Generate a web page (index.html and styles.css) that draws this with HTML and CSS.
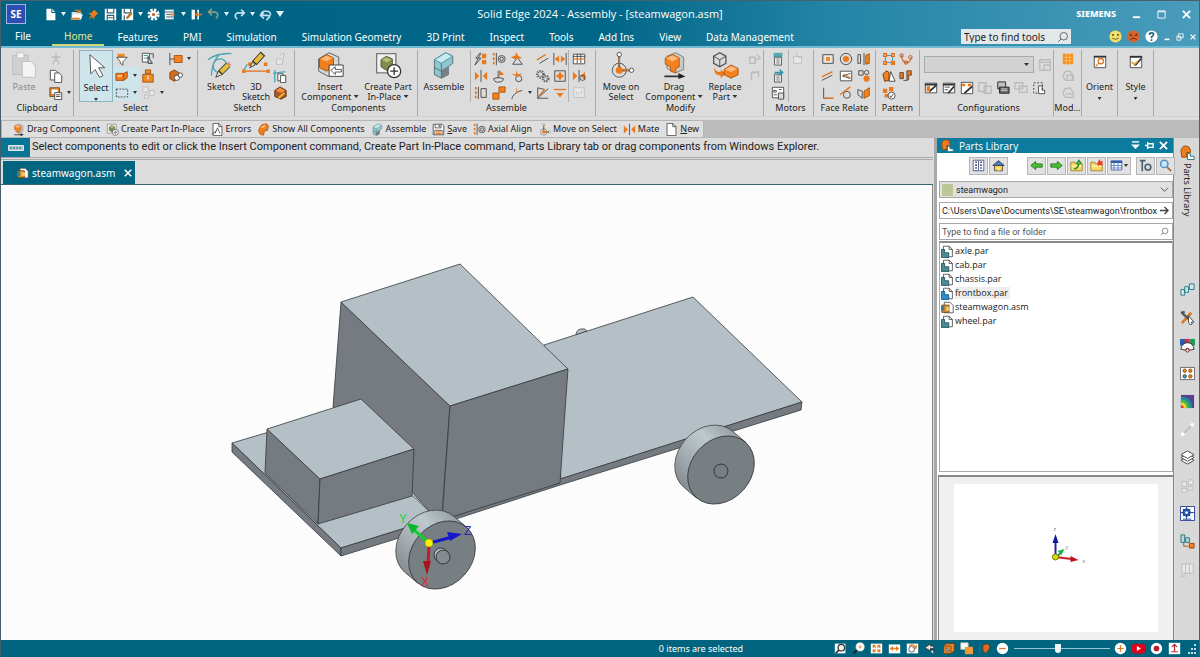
FILE: index.html
```html
<!DOCTYPE html>
<html lang="en">
<head>
<meta charset="utf-8">
<title>Solid Edge 2024 - Assembly - [steamwagon.asm]</title>
<link rel="stylesheet" href="styles.css">
</head>
<body>
<svg class="sprite" aria-hidden="true">
  <symbol id="part" viewBox="0 0 16 16"><path class="w" d="M3 1.500h7l4 4v9H3z"/><path class="k" d="M10 1.500v4h4"/><path fill="#4b8b95" stroke="#174c58" d="M.5 5.500h4v4h5v6h-9z"/></symbol>
  <symbol id="asm" viewBox="0 0 16 16"><path class="w" d="M4 1.500h7l4 4v9H4z"/><path fill="#d98a2b" stroke="#6b4a1c" d="M1 5h9v9H1z"/><path fill="#f3c26b" d="M6 7h5v5H6z"/><path fill="#3b8090" d="M0 6h4v6H0z"/></symbol>
  <symbol id="blob" viewBox="0 0 16 16"><path fill="#ef7d21" stroke="#b8570d" d="M3 6 6 2l6-1 2 3-1 5-4 1-1 5-4-1-2-4z"/><path fill="#ffb06a" d="m4 6 3-3 4-1-2 4z"/></symbol>
  <symbol id="move" viewBox="0 0 32 32"><circle class="k" cx="14" cy="22" r="8"/><path class="k2" d="M14 4v18h14"/><circle class="w" cx="14" cy="4" r="2.500"/><circle class="w" cx="28" cy="22" r="2.500"/><circle class="o" cx="14" cy="22" r="4"/><path class="os" d="M14 7v10M19 22h6"/></symbol>
  <symbol id="elbow" viewBox="0 0 32 32"><path fill="#8dc6cf" stroke="#4c6a72" d="m5 10 13-8 8 4v8l-5 4v9l-8 4-8-4z"/><path fill="#c6eaee" stroke="#4c8c98" d="m5 10 13-8 8 4-13 8z"/><path fill="#777f84" d="m13 22 8-5v10l-8 4z"/><path stroke="#4c6a72" d="M13 14v17M5 19l8 4"/></symbol>
  <symbol id="mate" viewBox="0 0 16 16"><path class="o" d="m1 3 5 5-5 5zM15 3l-5 5 5 5z"/><path class="k" d="M8 1v14"/></symbol>
  <symbol id="axial" viewBox="0 0 16 16"><path class="od" d="M2 1v14"/><path class="k" d="M5 1v14"/><circle class="k" cx="11" cy="8" r="4"/><circle class="k" cx="11" cy="8" r="2"/></symbol>
  <symbol id="glass" viewBox="0 0 16 16"><circle class="k" cx="9" cy="7" r="5"/><path class="k" d="m5.500 10.500-4 4"/></symbol>
  <symbol id="drag" viewBox="0 0 32 32"><path fill="#c7cacb" stroke="#777" d="m8 6 10-4 9 5v14l-9 4-10-5z"/><path fill="#f58220" stroke="#b35609" d="m6 8 8-4 8 4v10l-4 2v5l-6-2v-5l-6-3z"/><path fill="#ffb97d" d="m7 8 7-3 7 3-7 4z"/><path class="k2" d="M5 29h18"/><path fill="#222" d="m21 25 8 4-8 3z"/></symbol>
  <symbol id="create" viewBox="0 0 32 32"><path fill="#f0f0f0" stroke="#777" stroke-width="1.500" d="M3 3h22v22H3z"/><path fill="#7e8e4d" stroke="#4c562c" d="m8 10 6-4 7 3v9l-7 4-6-4z"/><path fill="#b4c078" d="m9 10 5-3 6 3-5 3z"/><circle fill="#fff" stroke="#333" stroke-width="1.500" cx="23" cy="23" r="7.500"/><path stroke="#333" stroke-width="1.500" d="M23 18.500v9M18.500 23h9"/></symbol>
  <symbol id="save" viewBox="0 0 16 16"><path class="w" d="M1.500 1.500h11l2 2v11h-13z"/><path class="k" d="M4 2v4h7V2M3.500 14V9h9v5"/><path fill="#777" d="M8 2h2v3H8z"/><path class="os" d="M5 11h6M5 13h6"/></symbol>
  <symbol id="doc" viewBox="0 0 16 16"><path class="w" d="M2.500.5h7l4 4v11h-11z"/><path class="k" d="M9.500.5v4h4"/></symbol>
  <symbol id="library" viewBox="0 0 16 16"><path fill="#f07c1e" stroke="#9d4c0a" d="M1 6q1-5 5-5t5 4v3H7v5H2z"/><path fill="#fff" stroke="#277" d="M8 9h3v3h4v3.500H8z"/></symbol>
  <symbol id="home" viewBox="0 0 16 16"><path fill="#ffcc4e" stroke="#444" d="M3 8v6.500h10V8"/><path fill="#4a7ebb" stroke="#234" d="m1 8 7-6 7 6z"/><path fill="#ffe08a" d="M6 10h4v4H6z"/></symbol>
  <symbol id="folder" viewBox="0 0 16 16"><path fill="#f7d768" stroke="#9b7a1c" d="M1 4h5l1 2h8v8.500H1z"/><path fill="#fff2a7" d="M2 8h12v2H2z"/></symbol>
</svg>
<div class="window">
  <header class="chrome">
    <div class="titlebar">
      <div class="logo">SE</div>
      <nav class="quick" aria-label="Quick access">
        <button aria-label="New"><svg viewBox="0 0 16 16"><path fill="#fff" d="M3 1h6v5h5v9H3z"/><path fill="#c9d9df" d="m10 1 4 4h-4z"/></svg></button>
        <button class="arr" aria-label="New options"></button>
        <button aria-label="Open"><svg viewBox="0 0 16 16"><path fill="#d9e6ea" d="M2 5h12v9H2z"/><path fill="#fff" d="m1 14 3-6h12l-3 6z"/><path class="o" d="M5 4q3-4 6-1l2-2v5H8l2-2q-2-1-5 0zM1 12h11v2H1z"/></svg></button>
        <button aria-label="Pin"><svg viewBox="0 0 16 16"><path class="o" d="m9 2 5 5-2 1-3 3v3L6 11l-4 3 3-5-3-3h3l3-3z"/></svg></button>
        <button aria-label="Save"><svg viewBox="0 0 16 16"><path fill="#fff" d="M1 1h14v14H1z"/><path stroke="#356273" stroke-width="1.500" d="M4 1v5h8V1M4 15V9h8v6M5 12h6"/></svg></button>
        <button aria-label="Save as"><svg viewBox="0 0 16 16"><path fill="#fff" d="M1 1h14v14H1z"/><path stroke="#356273" stroke-width="1.500" d="M4 1v5h8V1M4 15V9"/><path stroke="#b67a2b" stroke-width="3" d="m7 13 6-7"/></svg></button>
        <button class="arr" aria-label="Save options"></button>
        <button aria-label="Options"><svg viewBox="0 0 16 16"><circle cx="8" cy="8" r="6" stroke="#fff" stroke-width="3" stroke-dasharray="3 1.700"/><circle cx="8" cy="8" r="4.500" fill="#fff"/><circle cx="8" cy="8" r="2" fill="#d65b2a"/></svg></button>
        <button aria-label="Properties"><svg viewBox="0 0 16 16"><path fill="#e8eef0" d="M1 2h11v12H1z"/><path stroke="#456" d="M1 5h11M3 8h9M3 11h9"/><path class="o" d="M8 7h5v2H8z"/></svg></button>
        <button class="arr" aria-label="Property options"></button>
        <button aria-label="Close document"><svg viewBox="0 0 16 16"><path fill="#fff" d="M2 2h4v12H2zM9 2h2v12H9z"/><path class="o" d="m6 8 4-3v2h5v2h-5v2z"/></svg></button>
        <button aria-label="Undo"><svg viewBox="0 0 16 16"><path stroke="#8d9d84" stroke-width="2" d="M3 5h7q4 1 3 5l-2 3M6 1 2 5l4 4"/></svg></button>
        <button class="arr" aria-label="Undo options"></button>
        <button aria-label="Redo"><svg viewBox="0 0 16 16"><path stroke="#bfe0ee" stroke-width="2" d="M13 6H6q-4 1-3 5l2 3M10 2l4 4-4 4"/></svg></button>
        <button class="arr" aria-label="Redo options"></button>
        <button aria-label="Repeat"><svg viewBox="0 0 16 16"><path stroke="#bfe0ee" stroke-width="2" d="M14 9q1-5-5-5H7q-4 0-5 5h8q3 0 3 2l-4 4M6 6 2 9l4 4"/></svg></button>
        <button class="arr big" aria-label="Customize"></button>
      </nav>
      <h1>Solid Edge 2024 - Assembly - [steamwagon.asm]</h1>
      <div class="wincontrols"><b>SIEMENS</b>
        <button aria-label="Minimize"><svg viewBox="0 0 10 10"><path d="M1 8h8" stroke="#fff" stroke-width="2"/></svg></button>
        <button aria-label="Maximize"><svg viewBox="0 0 10 10"><path d="M1 1h8v8H1zM1 2h8" stroke="#fff"/></svg></button>
        <button aria-label="Close"><svg viewBox="0 0 10 10"><path d="m1 1 8 8M9 1 1 9" stroke="#fff" stroke-width="2"/></svg></button>
      </div>
    </div>
    <div class="menubar">
      <nav class="tabs" aria-label="Ribbon tabs">
        <button class="file">File</button><button class="active">Home</button><button>Features</button><button>PMI</button><button>Simulation</button><button>Simulation Geometry</button><button>3D Print</button><button>Inspect</button><button>Tools</button><button>Add Ins</button><button>View</button><button>Data Management</button>
      </nav>
      <label class="find"><input type="text" placeholder="Type to find tools" aria-label="Type to find tools"><svg viewBox="0 0 16 16"><use href="#glass"/></svg></label>
      <div class="help">
        <button aria-label="Happy"><svg viewBox="0 0 16 16"><circle cx="8" cy="8" r="7.500" fill="#f6e064"/><path fill="#443" d="M4 5h2v2H4zM10 5h2v2h-2z"/><path class="k" d="M4 10q4 3 8 0"/></svg></button>
        <button aria-label="Unhappy"><svg viewBox="0 0 16 16"><circle cx="8" cy="8" r="7.500" fill="#d8642b"/><path fill="#5b1a0a" d="m3 4 4 3H4zM13 4 9 7h3z"/><path stroke="#5b1a0a" d="M4 12q4-4 8 0"/></svg></button>
        <button aria-label="Help"><svg viewBox="0 0 16 16"><circle cx="8" cy="8" r="7.500" fill="#fff"/><path stroke="#22637c" stroke-width="2" d="M5.500 6q0-2.500 2.500-2.500t2.500 2Q10.500 7 8 8.500V10M8 11.500v2"/></svg></button>
        <button class="sm" aria-label="Minimize document"><svg viewBox="0 0 10 10"><path d="M2 8h6" stroke="#fff" stroke-width="2"/></svg></button>
        <button class="sm" aria-label="Restore document"><svg viewBox="0 0 10 10"><path d="M3 1h6v5H3zM1 4h5v5H1z" stroke="#fff"/></svg></button>
        <button class="sm" aria-label="Close document"><svg viewBox="0 0 10 10"><path d="m2 2 6 6M8 2 2 8" stroke="#fff" stroke-width="1.500"/></svg></button>
      </div>
    </div>
  </header>

  <section class="ribbon" aria-label="Home ribbon">
    <div class="group g-clip"><div class="body">
      <button class="large off w46"><svg viewBox="0 0 32 32"><path fill="#d0d0d0" stroke="#bbb" d="M3 5h18v22H3z"/><path fill="#f4f4f4" stroke="#bbb" d="M8 2h8v6H8zM14 12h10l5 5v13H14z"/></svg>Paste</button>
      <div class="stack w18">
        <button aria-label="Cut"><svg viewBox="0 0 16 16"><path class="l2" d="M8 1v9M3 6h10M7 9l-3 5M9 9l3 5"/></svg></button>
        <button aria-label="Copy"><svg viewBox="0 0 16 16"><path class="w" d="M1.500 1.500h6l3 3v8h-9z"/><path class="w" d="M6.500 4.500h5l3 3v8h-8z"/></svg></button>
        <button aria-label="Paste special"><svg viewBox="0 0 16 16"><path fill="#d78a33" stroke="#754713" d="M1 2h11v10H1z"/><path fill="#fff" d="M3 4h7v5H3z"/><path class="w" d="M6.500 7.500h8v8h-8z"/><path class="k" d="M8 10h5M8 12h5"/></svg></button>
      </div><div class="stack w8"><i></i><i></i><button class="dn" aria-label="Paste options"></button></div>
    </div><h2>Clipboard</h2></div>

    <div class="group g-select"><div class="body">
      <button class="large pressed w34"><svg viewBox="0 0 32 32"><path class="w" d="m9 3 1 22 5-5 5 9 4-2-5-9h7z"/></svg>Select<span class="dn"></span></button>
      <div class="stack w18">
        <button aria-label="Filter"><svg viewBox="0 0 16 16"><path fill="#ef8a25" d="M3 2h8v4H3z"/><path class="w" d="M2 6h12l-5 5v4l-3-2v-2z"/></svg></button>
        <button class="on" aria-label="Select face"><svg viewBox="0 0 16 16"><path fill="#ef7d21" stroke="#a44e0c" d="M1 5h9v8H1zM10 5l4-2v7l-4 3"/><path fill="#ffc38d" d="M3 7h5v2H3z"/></svg></button>
        <button class="on" aria-label="Area select"><svg viewBox="0 0 16 16"><path stroke="#333" stroke-dasharray="2 1.500" d="M1.500 3.500h13v9h-13z"/></svg></button>
      </div><div class="stack w8"><i></i><button class="dn on" aria-label="Face options"></button><button class="dn on" aria-label="Area options"></button></div>
      <div class="stack w18">
        <button aria-label="Pick part"><svg viewBox="0 0 16 16"><path class="w" d="M1.500 1.500h8v10h-8z"/><path stroke="#3a8a9b" d="M3 4h5M3 7h5"/><path fill="#b9c8cd" stroke="#333" d="m8 5 5 8H8z"/><path class="k" d="M10 2h4v5"/></svg></button>
        <button aria-label="Select visible"><svg viewBox="0 0 16 16"><path fill="#ef8a25" stroke="#9c5512" d="M2 6h12v9H2zM5 1h6v4H5z"/><path fill="#ffca8f" d="M7 7h2v5H7z"/></svg></button>
        <button aria-label="Select grid"><svg viewBox="0 0 16 16"><path class="l" d="M2 1h6v6H2zM4 10h4v4H4zM10 5h5v6h-5z"/></svg></button>
      </div><div class="stack w10"><i></i><i></i><button class="dn" aria-label="Grid options"></button></div>
      <div class="stack w18">
        <button aria-label="Box select"><svg viewBox="0 0 16 16"><path class="k" d="M1 1v14M1 8h5"/><path fill="#f58220" stroke="#a74d05" d="M6 4h9v8H6z"/></svg></button>
        <button aria-label="Select small"><svg viewBox="0 0 16 16"><path fill="#d36d20" stroke="#773c0f" d="m1 4 5-3 5 3v7l-5 3-5-3z"/><circle class="w" cx="9" cy="10" r="3"/><circle class="w" cx="13" cy="7" r="2.500"/></svg></button>
      </div><div class="stack w8"><button class="dn" aria-label="Box options"></button></div>
    </div><h2>Select</h2></div>

    <div class="group g-sketch"><div class="body">
      <button class="large w40"><svg viewBox="0 0 32 32"><path stroke="#4ba6b6" stroke-width="1.500" d="M1 10Q12 2 28 3M5 28Q6 12 14 4"/><circle stroke="#4ba6b6" stroke-width="1.500" cx="15" cy="17" r="8"/><path stroke="#444" stroke-width="7" d="m15 25 9-9"/><path stroke="#e5bd3c" stroke-width="5" d="m16 24 8-8"/><path stroke="#df8c7a" stroke-width="5" d="m24 16 2-2"/><path fill="#f2dfb4" stroke="#333" d="m10 30 3-7 4 4z"/></svg>Sketch</button>
      <button class="large w30"><svg viewBox="0 0 32 32"><path class="os" d="M2 23h28"/><path stroke="#4ba6b6" stroke-width="1.500" d="m6 15-5 9"/><path class="o" d="M0 21h4v4H0zM7 13h4v4H7zM25 13h4v4h-4zM28 21h4v4h-4z"/><path stroke="#333" stroke-width="7" d="m14 14 10-11"/><path stroke="#e5bd3c" stroke-width="5" d="m15 13 8-9"/><path fill="#f2dfb4" stroke="#333" d="m9 19 6-3-3-4z"/></svg>3D<br>Sketch</button>
      <div class="stack w18">
        <button aria-label="Project"><svg viewBox="0 0 16 16"><path class="l" d="M4 8h7v6H4zM8 4l4-3v6"/></svg></button>
        <button aria-label="Copy sketch"><svg viewBox="0 0 16 16"><path stroke="#4ba6b6" stroke-width="1.500" d="M2 1v14M0 5l14-2"/><path class="w" d="M5.500 5.500h6v8h-6z"/><path class="w" d="M8.500 7.500h6v8h-6z"/></svg></button>
        <button aria-label="Peer edges"><svg viewBox="0 0 16 16"><path fill="#a95820" stroke="#5a2c0d" d="m2 5 6-4 7 4v7l-6 3-7-3z"/><path fill="#f28c38" d="m3 5 5-3 6 3-5 3z"/><path stroke="#e8c047" stroke-width="2" d="m6 14 7-6"/></svg></button>
      </div>
    </div><h2>Sketch</h2></div>

    <div class="group g-comp"><div class="body">
      <button class="large w60"><svg viewBox="0 0 32 32"><path fill="#d3d7d8" stroke="#555" d="m3 9 12-7 11 5v15l-12 7-11-6z"/><path fill="#f08020" stroke="#9b4d0c" d="m4 9 8-5 8 4v11l-8 4-8-4z"/><path fill="#ffb670" d="m5 9 7-4 7 3-7 4z"/><path fill="#fff" stroke="#333" d="M15 16h16v13H15z"/><path class="k" d="m17 22 5-4v3h7v3h-7v3z"/></svg>Insert<br>Component <em></em></button>
      <button class="large w56"><svg viewBox="0 0 32 32"><use href="#create"/></svg>Create Part<br>In-Place <em></em></button>
    </div><h2>Components</h2></div>

    <div class="group g-assemble"><div class="body">
      <button class="large w52"><svg viewBox="0 0 32 32"><use href="#elbow"/></svg>Assemble</button>
      <div class="stack line w20">
        <button aria-label="FlashFit"><svg viewBox="0 0 16 16"><path class="k" d="M7 1 2 7h3l-4 8 7-8H5l3-6"/><path class="o" d="M9 2h5v5H9zM9 9h5v5H9z"/></svg></button>
        <button aria-label="Mate"><svg viewBox="0 0 16 16"><use href="#mate"/></svg></button>
        <button aria-label="Planar align"><svg viewBox="0 0 16 16"><path class="od" d="M2 1v14"/><path class="k" d="M5 1v14M8 3h6v10H8z"/></svg></button>
      </div>
      <div class="stack w18">
        <button aria-label="Axial align"><svg viewBox="0 0 16 16"><use href="#axial"/></svg></button>
        <button aria-label="Insert"><svg viewBox="0 0 16 16"><path class="k" d="M7 2v9M2 11q5-3 11 0 0 4-6 4-5 0-5-4"/><path class="o" d="m8 1 6 5-6 2z"/></svg></button>
        <button aria-label="Connect"><svg viewBox="0 0 16 16"><path fill="#f58220" stroke="#a74d05" d="M8 1h7v6H8zM1 8h7v7H1z"/></svg></button>
      </div>
      <div class="stack w18">
        <button aria-label="Angle"><svg viewBox="0 0 16 16"><path class="k" d="m8 7-5 7h11L9 7"/><path class="o" d="m7 0 2 4 5 3-9 1-4-2 5-2z"/></svg></button>
        <button aria-label="Tangent"><svg viewBox="0 0 16 16"><circle class="k" cx="10" cy="11" r="3.500"/><path class="o" d="m1 5 6 1V1l2 5 5-1-5 4z"/></svg></button>
        <button aria-label="Cam"><svg viewBox="0 0 16 16"><path class="k" d="M2 15Q3 8 14 5"/><path class="o" d="m1 5 6 2V1l2 7z"/></svg></button>
      </div><div class="stack w8"><i></i><i></i><button class="dn" aria-label="Cam options"></button></div>
      <div class="stack w17">
        <button aria-label="Parallel"><svg viewBox="0 0 16 16"><path class="os" d="m1 9 10-6"/><path class="k" d="m4 13 10-6"/></svg></button>
        <button aria-label="Gear"><svg viewBox="0 0 16 16"><circle class="gear" cx="5" cy="6" r="3.500"/><circle class="gear" cx="11" cy="11" r="3"/></svg></button>
        <button aria-label="Match coordinates"><svg viewBox="0 0 16 16"><path class="k" d="M2 2v12h12M2 14 14 3M2 2l8 2"/><path class="os" d="m3 12 7-8"/></svg></button>
      </div>
      <div class="stack w17">
        <button aria-label="Center plane"><svg viewBox="0 0 16 16"><path class="k" d="M1 1v14M15 1v14"/><path class="o" d="m2 8 5-4v8zM14 8 9 4v8z"/></svg></button>
        <button aria-label="Rigid set"><svg viewBox="0 0 16 16"><path class="k" d="M2 2h12v12H2z"/><path class="o" d="m8 3 2 3 3 2-3 2-2 3-2-3-3-2 3-2z"/></svg></button>
        <button aria-label="Path"><svg viewBox="0 0 16 16"><path class="os" d="M1 4h14"/><path class="o" d="m8 13 4-5H4z"/></svg></button>
      </div>
      <div class="stack line w20">
        <button aria-label="Relationship manager"><svg viewBox="0 0 16 16"><path class="w" d="M1.500 2.500h13v11h-13z"/><path class="k" d="M1 5h14M6 2v11M10 2v11"/><path class="os" d="M2 8h12"/></svg></button>
        <button aria-label="Capture fit"><svg viewBox="0 0 16 16"><use href="#mate"/><circle class="k" cx="12" cy="10" r="3"/></svg></button>
        <button aria-label="Assembly sketch"><svg viewBox="0 0 16 16"><path class="l" d="M2 2h12v11H2zM5 6v4M8 7v4M11 5v4"/></svg></button>
      </div>
    </div><h2>Assemble</h2></div>

    <div class="group g-modify"><div class="body">
      <button class="large w46"><svg viewBox="0 0 32 32"><use href="#move"/></svg>Move on<br>Select</button>
      <button class="large w60"><svg viewBox="0 0 32 32"><use href="#drag"/></svg>Drag<br>Component <em></em></button>
      <button class="large w42"><svg viewBox="0 0 32 32"><path fill="#d9dbdc" stroke="#555" stroke-width="1.500" d="m3 6 7-4 7 4v8l-7 4-7-4z"/><path class="k" d="m3 6 7 4 7-4M10 10v8"/><path class="o" d="M4 17q0 7 7 7v-3l6 5-6 5v-3Q2 28 4 17z"/><path fill="#f58220" stroke="#a74d05" d="m15 21 8-5 8 4v7l-8 4-8-4z"/><path fill="#ffb97d" d="m16 21 7-4 7 3-7 4z"/></svg>Replace<br>Part <em></em></button>
      <div class="stack w18">
        <button aria-label="Disperse"><svg viewBox="0 0 16 16"><path class="l2" d="M2 6h6v7H2zM8 9l6-2-4-4"/></svg></button>
        <button aria-label="Transfer"><svg viewBox="0 0 16 16"><path class="l2" d="M4 13V5l8-2v6M3 5l4-3"/></svg></button>
      </div>
    </div><h2>Modify</h2></div>

    <div class="group g-motor"><div class="body">
      <div class="stack w20">
        <button aria-label="Rotational motor"><svg viewBox="0 0 16 16"><path fill="#55a7b6" d="M3 1h10v5H3z"/><path fill="#e7eaeb" stroke="#555" d="M4 6h8v9H4z"/><path stroke="#888" d="M7 7v7M9 7v7"/></svg></button>
        <button aria-label="Linear motor"><svg viewBox="0 0 16 16"><path fill="#e7eaeb" stroke="#555" d="M4 6h8v9H4z"/><path stroke="#3097ab" stroke-width="2" d="M4 4h8M10 1l3 3-3 3"/><path stroke="#888" d="M7 7v7M9 7v7"/></svg></button>
        <button aria-label="Simulate motor"><svg viewBox="0 0 16 16"><path class="w" d="M1.500 1.500h13v12h-13z"/><path class="k" d="M3 5h3v2H3zM3 10h4M9 4h3"/><path fill="#ddd" stroke="#444" d="M8.500 8h6v7h-6z"/></svg></button>
      </div>
      <div class="stack line w18"><button aria-label="Motor gear"><svg viewBox="0 0 16 16"><path class="l" d="M3 5h9v8H3zM6 1l2 5h5"/></svg></button></div>
    </div><h2>Motors</h2></div>

    <div class="group g-face"><div class="body">
      <div class="stack w18">
        <button aria-label="Concentric box"><svg viewBox="0 0 16 16"><path class="k" d="M2 3h12v10H2z"/><path fill="#ef8a25" stroke="#fff" d="M5 5h6v6H5z"/></svg></button>
        <button aria-label="Face parallel"><svg viewBox="0 0 16 16"><path class="os" d="m1 9 12-6"/><path class="k" d="m1 13 12-6"/></svg></button>
        <button aria-label="Perpendicular"><svg viewBox="0 0 16 16"><path class="k" d="M3 2v12h11"/><path class="os" d="M4 14h10"/></svg></button>
      </div>
      <div class="stack w18">
        <button aria-label="Concentric"><svg viewBox="0 0 16 16"><circle class="k" cx="8" cy="8" r="6.500"/><circle class="o" cx="8" cy="8" r="3.500"/></svg></button>
        <button aria-label="Coplanar"><svg viewBox="0 0 16 16"><path class="w" d="M1.500 2.500h13v11h-13z"/><path class="k" d="m13 5-9 3 9 3"/><path class="os" d="m5 6 8 4"/></svg></button>
        <button aria-label="Face tangent"><svg viewBox="0 0 16 16"><circle class="k" cx="9" cy="10" r="4"/><path class="os" d="m1 10 12-9"/></svg></button>
      </div>
      <div class="stack w18">
        <button aria-label="Symmetry"><svg viewBox="0 0 16 16"><path class="k" d="M1 3h3v10H1zM8 1v14"/><path fill="#f58220" stroke="#a74d05" d="m10 4 4-2v11l-4 1z"/></svg></button>
        <button aria-label="Equal radius"><svg viewBox="0 0 16 16"><path class="k" d="M2 2h5v5H2z"/><circle class="k" cx="11" cy="4" r="2.500"/><circle class="o" cx="11" cy="11" r="3.500"/></svg></button>
        <button aria-label="Offset"><svg viewBox="0 0 16 16"><path class="k" d="m1 4 5 2v8L1 10z"/><path fill="#f58220" stroke="#a74d05" d="m8 6 6-4v9l-6 3z"/></svg></button>
      </div>
    </div><h2>Face Relate</h2></div>

    <div class="group g-pattern"><div class="body">
      <div class="stack w18">
        <button aria-label="Pattern"><svg viewBox="0 0 16 16"><path stroke="#3794b8" d="M4 4h8v8H4z"/><path fill="#fff" stroke="#dc6b17" stroke-width="1.500" d="M2 2h3v3H2zM11 2h3v3h-3zM2 11h3v3H2z"/><path class="o" d="M10 10h5v5h-5z"/></svg></button>
        <button aria-label="Mirror"><svg viewBox="0 0 16 16"><path fill="#f58220" stroke="#63340d" d="m1 6 4-4 3 2v9l-5 1z"/><path class="w" d="m10 3 5 11H8z"/></svg></button>
        <button aria-label="Duplicate"><svg viewBox="0 0 16 16"><path class="o" d="M1 3h5v5H1zM8 1h5v5H8zM3 9h4v4H3z"/><circle class="w" cx="11" cy="11" r="4"/><path class="k" d="m9 11 1 2 3-4"/></svg></button>
      </div>
      <div class="stack w16">
        <button aria-label="Pattern along curve"><svg viewBox="0 0 16 16"><path stroke="#d46c2c" stroke-width="1.500" d="M3 3q0 8 5 9t6-6"/><circle stroke="#b7561a" cx="3" cy="4" r="2"/><circle stroke="#b7561a" cx="8" cy="12" r="2"/><circle stroke="#b7561a" cx="13" cy="6" r="2"/></svg></button>
        <button aria-label="Clone"><svg viewBox="0 0 16 16"><path fill="#d57b34" stroke="#6f421f" d="M1 4h4v7H1zM9 2h5v5h-3v5H9z"/><path class="k" d="M5 13h5"/></svg></button>
      </div>
    </div><h2>Pattern</h2></div>

    <div class="group g-config"><div class="configs">
      <div class="row"><label class="combo"><select aria-label="Configuration"><option></option></select><em></em></label><button aria-label="Save configuration"><svg viewBox="0 0 16 16"><path class="l2" d="M2 2h12v12H2zM2 5h12M7 8h7v6H7z"/></svg></button></div>
      <div class="row">
        <button aria-label="Display configuration"><svg viewBox="0 0 16 16"><path class="w" d="M1.500 2.500h13v11h-13z"/><path class="k2" d="M1 4h14M6 12l8-7"/><path class="o" d="M3 6h4v6H3z"/></svg></button>
        <button aria-label="Edit configuration"><svg viewBox="0 0 16 16"><path class="w" d="M1.500 2.500h13v11h-13z"/><path class="k2" d="M1 4h14M7 14l7-8"/><path class="k" d="M3 7h6M3 10h4"/></svg></button>
        <button aria-label="Explode"><svg viewBox="0 0 16 16"><path class="w" d="M1.500 1.500h13v13h-13z"/><path class="k2" d="m5 14 9-8"/><path class="o" d="M2 3h4v3H2zM9 3h4v3H9z"/></svg></button>
        <button aria-label="Update"><svg viewBox="0 0 16 16"><path class="l2" d="M1 2h8v10H1zM7 6h8v8H7z"/></svg></button>
        <button aria-label="Zones"><svg viewBox="0 0 16 16"><path fill="#bcc0c1" stroke="#222" d="M2 1h9v8H2z"/><path fill="#666" stroke="#222" d="M4 7h11v7H4z"/><path stroke="#ddd" d="M6 9h7M6 11h7"/></svg></button>
        <button aria-label="Alternate"><svg viewBox="0 0 16 16"><path class="l2" d="M1 2h9v7H1zM6 6h9v7H6z"/></svg></button>
        <button aria-label="Zone area"><svg viewBox="0 0 16 16"><path stroke="#333" stroke-dasharray="2 2" d="M2 2h10v12H2z"/><path class="w" d="M7.500 5.500v9h7v-4h-3v-5z"/></svg></button>
      </div>
    </div><h2>Configurations</h2></div>

    <div class="group g-mode"><div class="body"><div class="stack w20">
      <button aria-label="Mode grid"><svg viewBox="0 0 16 16"><path fill="#f58b18" d="M2 2h12v12H2z"/><path stroke="#ffc36f" d="M6 2v12M10 2v12M2 6h12M2 10h12"/></svg></button>
      <button aria-label="Limited update"><svg viewBox="0 0 16 16"><path class="l2" d="m2 8 3-5 5-1 4 6v5H5zM7 7h6v6H7z"/></svg></button>
      <button aria-label="Limited save"><svg viewBox="0 0 16 16"><path class="l2" d="m2 8 3-5 5-1 4 6v5H5zM6 9h8"/></svg></button>
    </div></div><h2>Mod...</h2></div>
    <div class="group g-orient"><button class="large tall"><svg viewBox="0 0 16 16"><path class="w" d="M1.500 1.500h13v13h-13z"/><path class="k2" d="M1 2h14"/><circle class="os" cx="9" cy="7" r="3"/><path class="os" d="m7 9-4 4"/></svg>Orient<span class="dn"></span></button></div>
    <div class="group g-orient"><button class="large tall"><svg viewBox="0 0 16 16"><path class="w" d="M1.500 1.500h13v13h-13z"/><path class="k2" d="M1 2h14M7 12l7-8"/><path stroke="#d9a738" stroke-width="2" d="m3 8 3 3 4-4"/></svg>Style<span class="dn"></span></button></div>
  </section>

  <div class="shortcuts"><nav aria-label="Shortcut bar">
    <button><svg viewBox="0 0 32 32"><use href="#drag"/></svg>Drag Component</button>
    <button><svg viewBox="0 0 32 32"><use href="#create"/></svg>Create Part In-Place</button>
    <button><svg viewBox="0 0 16 16"><use href="#doc"/><path class="k" d="m5 13 3-7 3 7M1 14l6-5"/></svg>Errors</button>
    <button><svg viewBox="0 0 16 16"><use href="#blob"/></svg>Show All Components</button>
    <button><svg viewBox="0 0 32 32"><use href="#elbow"/></svg>Assemble</button>
    <button><svg viewBox="0 0 16 16"><use href="#save"/></svg><span><u>S</u>ave</span></button>
    <button><svg viewBox="0 0 16 16"><use href="#axial"/></svg>Axial Align</button>
    <button><svg viewBox="0 0 32 32"><use href="#move"/></svg>Move on Select</button>
    <button><svg viewBox="0 0 16 16"><use href="#mate"/></svg>Mate</button>
    <button><svg viewBox="0 0 16 16"><use href="#doc"/></svg><span><u>N</u>ew</span></button>
  </nav></div>

  <main class="work">
    <div class="document">
      <div class="prompt"><span class="promptbox"><svg viewBox="0 0 16 6"><path fill="#a9c8d2" stroke="#dceaf0" d="M.5.5h15v5H.5z"/><path stroke="#315e6c" stroke-dasharray="2 1" d="M2 3h12"/></svg></span><p>Select components to edit or click the Insert Component command, Create Part In-Place command, Parts Library tab or drag components from Windows Explorer.</p></div>
      <div class="doctabs"><div class="doctab"><svg viewBox="0 0 16 16"><use href="#asm"/></svg><span>steamwagon.asm</span><button aria-label="Close steamwagon.asm"><svg viewBox="0 0 10 10"><path d="m1 1 8 8M9 1 1 9" stroke="#fff" stroke-width="2"/></svg></button></div></div>
      <div class="view">
        <svg viewBox="1 185 931 455" role="img" aria-label="Steam wagon assembly">
          <defs>
            <linearGradient id="rim" gradientUnits="userSpaceOnUse" x1="-48" y1="18" x2="16" y2="-44"><stop offset="0" stop-color="#7c8488"/><stop offset=".35" stop-color="#a3abb0"/><stop offset=".65" stop-color="#bec9ce"/><stop offset="1" stop-color="#8e969b"/></linearGradient>
            <g id="wheel">
              <path d="M-37.500 17A37 30-48 0 1 12-38.500L25-27.500-24.500 28z" fill="url(#rim)" stroke="#3c4144" stroke-width=".8"/>
              <ellipse rx="37" ry="30" transform="rotate(-48)" fill="#787f83" stroke="#2f3437" stroke-width=".8"/>
            </g>
          </defs>
          <g stroke="#333a3e" stroke-width=".8" stroke-linejoin="round">
            <path fill="#b5c0c6" d="M576 335q0-5 5-6 4-1 6 2z"/>
            <path fill="#b5c0c6" d="m544 345 149-48 109 105-241 77z"/>
            <path fill="#757b80" d="m802 402-1 8-241 75-101 33-20 4 121-43z"/>
            <path fill="#b5c0c6" d="m232 443 37-11 144 64 17 16-12 12-77 24z"/>
            <path fill="#757b80" d="m232 443 109 105v8L232 452z"/>
            <path fill="#757b80" d="m341 548 90-28v8l-90 28z"/>
            <path fill="#757b80" d="m341 302 109 104-8 108-12-2-97-105z"/>
            <path fill="#b5c0c6" d="m341 302 119-38 108 105-118 37z"/>
            <path fill="#757b80" d="m450 406 118-37-8 114-118 37z"/>
            <path fill="#757b80" d="m267 429 53 50-2 45-53-51z"/>
            <path fill="#b5c0c6" d="m267 429 94-30 53 50-94 30z"/>
            <path fill="#757b80" d="m320 479 94-30-2 47-94 28z"/>
          </g>
          <use href="#wheel" x="721" y="470"/>
          <use href="#wheel" x="442" y="555"/>
          <circle cx="721" cy="471" r="7" stroke="#303538"/>
          <circle cx="441" cy="555" r="7" fill="#b5c0c6" stroke="#303538"/>
          <circle cx="443" cy="557" r="7" fill="#858c90" stroke="#303538"/>
          <path stroke="#18c834" stroke-width="3" d="m429 543-15-13"/><path fill="#08b92a" d="m407 523 12 3-7 8z"/>
          <path stroke="#1518c8" stroke-width="3" d="m430 543 22-6"/><path fill="#1518c8" d="m462 534-15-2 3 9z"/>
          <path stroke="#c51a22" stroke-width="3" d="m429 544-1 22"/><path fill="#a8121c" d="m427 575-4-14h8z"/>
          <circle cx="429" cy="543" r="4" fill="#fff000" stroke="#8b8b00" stroke-width=".5"/>
          <g class="axes"><text x="399" y="523" fill="#16d43b">Y</text><text x="464" y="535" fill="#2925a8">Z</text><text x="421" y="586" fill="#e32630">X</text></g>
        </svg>
      </div>
    </div>

    <aside class="library">
      <header><svg viewBox="0 0 16 16"><use href="#library"/></svg><h2>Parts Library</h2>
        <button aria-label="Panel menu"><svg viewBox="0 0 10 10"><path d="M1 1h8" stroke="#fff" stroke-width="1.500"/><path fill="#fff" d="M0 4h10L5 9z"/></svg></button>
        <button aria-label="Pin panel"><svg viewBox="0 0 10 10"><path d="M0 5h3M3 1v8M3 3h6v4H3M9 2v6" stroke="#fff" stroke-width="1.500"/></svg></button>
        <button aria-label="Close panel"><svg viewBox="0 0 10 10"><path d="m1 1 8 8M9 1 1 9" stroke="#fff" stroke-width="2"/></svg></button>
      </header>
      <div class="libtools">
        <button aria-label="List"><svg viewBox="0 0 16 16"><path fill="#fff" stroke="#334f94" d="M1.500 1.500h13v13h-13z"/><path stroke="#333e9e" stroke-width="2" stroke-dasharray="2 1.500" d="M5 3v11M11 3v11"/><path stroke="#444" d="M8 2v12"/></svg></button>
        <button aria-label="Home"><svg viewBox="0 0 16 16"><use href="#home"/></svg></button>
        <button class="gap" aria-label="Back"><svg viewBox="0 0 16 16"><path fill="#48c52e" stroke="#176f13" d="m1 8 6-5v3h8v4H7v3z"/></svg></button>
        <button aria-label="Forward"><svg viewBox="0 0 16 16"><path fill="#48c52e" stroke="#176f13" d="M15 8 9 3v3H1v4h8v3z"/></svg></button>
        <button aria-label="Up one level"><svg viewBox="0 0 16 16"><use href="#folder"/><path stroke="#249226" stroke-width="2" d="M5 12q5 0 6-7M8 6l3-4 3 4"/></svg></button>
        <button aria-label="New folder"><svg viewBox="0 0 16 16"><use href="#folder"/><path fill="#e43b23" d="m12 0 1 3 3-1-1 3 1 3-4-1-2 2-1-4z"/></svg></button>
        <button class="wide" aria-label="Views"><svg viewBox="0 0 16 16"><path fill="#fff" stroke="#345da5" d="M1.500 2.500h13v11h-13z"/><path fill="#315ca7" d="M1 2h14v3H1z"/><path stroke="#5279b9" d="M5 5v9M10 5v9M1 8h14M1 11h14"/></svg><em></em></button>
        <button class="part" aria-label="Search options"><svg viewBox="0 0 16 16"><path stroke="#4c5f6e" stroke-width="2" d="M1 2h7M4 2v13"/><circle stroke="#4c5f6e" stroke-width="2" cx="11" cy="10" r="3.500"/></svg></button>
        <button aria-label="Search"><svg viewBox="0 0 16 16"><circle fill="#c6e6ff" stroke="#5792c2" stroke-width="2" cx="6.500" cy="6" r="4.500"/><path stroke="#986a45" stroke-width="2" d="m10 10 5 5"/></svg></button>
      </div>
      <label class="field folder"><span class="swatch"></span><select aria-label="Folder"><option>steamwagon</option></select><svg viewBox="0 0 10 10"><path class="k" d="m1 3 4 4 4-4"/></svg></label>
      <label class="field"><input aria-label="Path" value="C:\Users\Dave\Documents\SE\steamwagon\frontbox"><svg viewBox="0 0 10 10"><path class="k" stroke-width="1.500" d="M0 5h9M5 1l4 4-4 4"/></svg></label>
      <label class="field search"><input aria-label="Find a file or folder" placeholder="Type to find a file or folder"><svg viewBox="0 0 16 16"><use href="#glass"/></svg></label>
      <ul class="files">
        <li><svg viewBox="0 0 16 16"><use href="#part"/></svg><span>axle.par</span></li>
        <li><svg viewBox="0 0 16 16"><use href="#part"/></svg><span>cab.par</span></li>
        <li><svg viewBox="0 0 16 16"><use href="#part"/></svg><span>chassis.par</span></li>
        <li class="sel"><svg viewBox="0 0 16 16"><use href="#part"/></svg><span>frontbox.par</span></li>
        <li><svg viewBox="0 0 16 16"><use href="#asm"/></svg><span>steamwagon.asm</span></li>
        <li><svg viewBox="0 0 16 16"><use href="#part"/></svg><span>wheel.par</span></li>
      </ul>
      <div class="preview"><svg viewBox="955 483 203 148"><path stroke="#2222a5" stroke-width="2" d="M1056 556v-17"/><path fill="#171797" d="m1056 533-3 9h6z"/><path stroke="#15a53b" stroke-width="2" d="m1057 556 5-5"/><path fill="#12b83b" d="m1065 548-7 2 4 4z"/><path stroke="#c91e24" stroke-width="2" d="m1056 556 16 2"/><path fill="#b9151d" d="m1079 559-8-4v6z"/><circle cx="1056" cy="556" r="3" fill="#d7df00" stroke="#777d00"/><g class="mini"><text x="1054" y="530">z</text><text x="1083" y="562">x</text><text x="1066" y="548">y</text></g></svg></div>
    </aside>

    <nav class="rail" aria-label="Panels">
      <button class="railtab"><svg viewBox="0 0 16 16"><use href="#library"/></svg><span>Parts Library</span></button>
      <div class="railicons">
        <button aria-label="PathFinder"><svg viewBox="0 0 16 16"><path fill="#d4e7eb" stroke="#277987" d="M1 8h4v6H1zM5 5h4v6H5zM10 2h5v6h-5z"/></svg></button>
        <button aria-label="Tools"><svg viewBox="0 0 16 16"><path stroke="#dd7a22" stroke-width="3" d="M2 14 12 3"/><path stroke="#555" stroke-width="2.500" d="m2 3 10 9M1 3l4-1"/><path class="w" d="m9 6 6 7-3 0 1 2-2 1-2-3z"/></svg></button>
        <button aria-label="Sensors"><svg viewBox="0 0 16 16"><path fill="#275fae" d="M0 1h8v7H0z"/><path fill="#d03040" d="M5 1h5v5H5z"/><path fill="#26965d" d="M10 1h6v7h-6z"/><path fill="#fff" stroke="#333" d="M1 12Q2 5 8 5t7 7l-5 1-2-2-2 2z"/><circle cx="8" cy="13" r="2" stroke="#a22"/></svg></button>
        <button aria-label="Standard parts"><svg viewBox="0 0 16 16"><path fill="#fff" stroke="#666" d="M.5 1.500h15v13H.5z"/><circle fill="#e98929" stroke="#884b12" cx="5" cy="5" r="1.800"/><circle fill="#e98929" stroke="#884b12" cx="11" cy="5" r="1.800"/><circle fill="#549ab7" stroke="#174b68" cx="5" cy="11" r="1.800"/><circle fill="#e98929" stroke="#884b12" cx="11" cy="11" r="1.800"/></svg></button>
        <button aria-label="Materials"><svg viewBox="0 0 16 16"><path fill="#5b3f8d" d="M1 1h14v14H1z"/><path fill="#1b8f9b" d="M1 3q12 0 12 12H1z"/><path fill="#48b64e" d="M1 6q9 0 9 9H1z"/><path fill="#f5d72c" d="M1 9q6 0 6 6H1z"/><path fill="#de3a32" d="M1 12q3 0 3 3H1z"/></svg></button>
        <button aria-label="Layers line"><svg viewBox="0 0 16 16"><path class="l2" d="m3 13 10-10"/><circle fill="#fff" cx="3" cy="13" r="2"/><circle fill="#fff" cx="13" cy="3" r="2"/></svg></button>
        <button aria-label="Layers"><svg viewBox="0 0 16 16"><path class="w" d="m1 11 7-4 7 4-7 4z"/><path class="w" d="m1 8 7-4 7 4-7 4z"/><path class="w" d="m1 5 7-4 7 4-7 4z"/></svg></button>
        <button aria-label="Groups"><svg viewBox="0 0 16 16"><path class="l" d="M2 4h5v5H2zM9 2h5v5H9zM2 11h5v4H2zM9 9h4v4H9z"/></svg></button>
        <button aria-label="Simulation"><svg viewBox="0 0 16 16"><path fill="#fff" stroke="#2a4096" d="M.5.5h15v15H.5z"/><circle fill="#3772c8" stroke="#153f91" cx="7" cy="7" r="4"/><path stroke="#153f91" d="M7 1v13M1 7h14M3 3l8 8M3 11l8-8M3 14h9"/><circle fill="#fff" cx="7" cy="7" r="1.500"/></svg></button>
        <button aria-label="Structure"><svg viewBox="0 0 16 16"><path fill="#b8d8df" stroke="#267383" d="M1 1h4v8H1zM6 4h4v5H6z"/><path stroke="#a35a19" d="M4 9v4h5"/><path fill="#ef8126" stroke="#9e4a0a" d="M10 10h5v5h-5z"/></svg></button>
        <button aria-label="Chart"><svg viewBox="0 0 16 16"><path class="l" d="M2 2h12v10H2zM6 2v10M10 2v10M1 15h5"/></svg></button>
      </div>
    </nav>
  </main>

  <footer class="status">
    <p>0 items are selected</p>
    <div class="statustools">
      <button aria-label="Zoom area"><svg viewBox="0 0 16 16"><path fill="#fff" d="M1 2h13v12H1z"/><circle fill="#eee" stroke="#333" stroke-width="1.500" cx="9" cy="7" r="4"/><path class="k2" d="m6 10-4 4"/></svg></button>
      <button aria-label="Zoom"><svg viewBox="0 0 16 16"><circle fill="#fff" stroke="#ddd" cx="10" cy="6" r="5"/><path stroke="#e47a22" d="M8 6h4M10 4v4"/><path stroke="#222" stroke-width="2" d="m6 10-4 4"/></svg></button>
      <button aria-label="Fit"><svg viewBox="0 0 16 16"><path fill="#fff" d="M1 2h14v12H1z"/><path class="os" d="m4 4 3 3M12 4 9 7M4 12l3-3M12 12 9 9M4 7V4h3M9 4h3v3M4 9v3h3M9 12h3V9"/></svg></button>
      <button aria-label="Pan"><svg viewBox="0 0 16 16"><path fill="#fff" d="M1 3h14v11H1z"/><path class="o" d="m2 8 4-3v2h4V5l4 3-4 3V9H6v2z"/></svg></button>
      <button aria-label="Rotate"><svg viewBox="0 0 16 16"><path fill="#fff" d="M1 2h14v12H1z"/><circle class="k" cx="7" cy="9" r="3.500"/><path class="os" d="M4 5q6-4 8 3M13 4l-1 4-3-1"/></svg></button>
      <button aria-label="Look at face"><svg viewBox="0 0 16 16"><path fill="#ddd" stroke="#333" d="m8 2-7 5 7 4v-3h4V5H8zM7 10h5v5"/></svg></button>
      <button aria-label="View orientation"><svg viewBox="0 0 16 16"><path fill="#ec8b2c" stroke="#6f3e11" d="M2 5h9v9H2zM2 5l3-3h10v9l-4 3"/><path class="w" d="m5 7 4 4H5z"/></svg></button>
      <button aria-label="View style"><svg viewBox="0 0 16 16"><path fill="#fff" stroke="#c9c1b0" d="M1 1h9v8H1z"/><path fill="#ef9a36" d="M6 6h10v9H6z"/></svg></button>
      <button aria-label="Shading"><svg viewBox="0 0 16 16"><path stroke="#6c665e" stroke-dasharray="1 1" d="M2 1v14M4 1v14"/><path fill="#dd6c24" stroke="#693811" d="m6 4 5-2 4 3-2 5-4 4-3-4z"/></svg></button>
      <button aria-label="Zoom out"><svg viewBox="0 0 16 16"><circle fill="#fff" cx="8" cy="8" r="7"/><path class="os" d="M4 8h8"/></svg></button>
      <input type="range" aria-label="Zoom level" min="0" max="100" value="45">
      <button aria-label="Zoom in"><svg viewBox="0 0 16 16"><circle fill="#fff" cx="8" cy="8" r="7"/><path class="os" d="M4 8h8M8 4v8"/></svg></button>
      <button aria-label="YouTube"><svg viewBox="0 0 16 16"><rect fill="#e00018" y="2" width="16" height="12" rx="3"/><path fill="#fff" d="m6 5 5 3-5 3z"/></svg></button>
      <button aria-label="Record"><svg viewBox="0 0 16 16"><circle fill="#fff" cx="8" cy="8" r="7"/><circle fill="#b61d2f" cx="8" cy="8" r="3.500"/></svg></button>
      <button aria-label="Upload"><svg viewBox="0 0 16 16"><path fill="#fff" d="M1 1h14v14H1z"/><path stroke="#ae2634" stroke-width="1.500" d="M8 11V4M5 6l3-3 3 3M4 12h8"/></svg></button>
      <svg class="grip" viewBox="0 0 10 10"><path fill="#c5dce5" d="M8 0h2v2H8zM5 4h2v2H5zM8 4h2v2H8zM2 8h2v2H2zM5 8h2v2H5zM8 8h2v2H8z"/></svg>
    </div>
  </footer>
</div>
</body>
</html>
```
FILE: styles.css
```css
* { box-sizing: border-box; }
body { margin: 0; font: 10px/12px "Noto Sans", "Open Sans", sans-serif; color: #222; }
button, input, select { font: inherit; color: inherit; margin: 0; padding: 0; border: 0; background: none; min-width: 0; }
h1, h2, p, ul { margin: 0; padding: 0; font-weight: 400; font-size: inherit; }
svg { fill: none; display: block; flex: none; }
.sprite { width: 0; height: 0; position: absolute; }

/* shared icon strokes and fills */
.k { stroke: #444; }
.k2 { stroke: #333; stroke-width: 2; }
.w { fill: #fff; stroke: #444; }
.o { fill: #ec7a1c; }
.os { stroke: #e07820; stroke-width: 1.5; }
.od { stroke: #e07820; stroke-width: 2; stroke-dasharray: 3 2; }
.l { fill: #e8e8e8; stroke: #bcbcbc; }
.l2 { stroke: #bababa; stroke-width: 1.5; }
.gear { stroke: #666; stroke-width: 3; stroke-dasharray: 1.5 1; }

.window { height: 100vh; min-height: 600px; display: flex; flex-direction: column; border: 1px solid #48606a; border-bottom: 0; background: #dcdcdc; }
.chrome { background: linear-gradient(90deg, #006384, #006687 50%, #2585a6 70%, #4a9cbb); color: #fff; border-bottom: 2px solid #73b9d1; }
.titlebar { height: 26px; display: grid; grid-template-columns: 20px 1fr auto 1fr 25px; align-items: center; padding-left: 5px; }
.titlebar h1 { font: 11px/14px "Open Sans", "Noto Sans", sans-serif; }
.logo { width: 20px; height: 20px; background: #2d4eb0; border: 1px solid #9fb6e4; font-weight: 700; line-height: 19px; text-align: center; }
.quick { display: flex; align-items: center; padding-left: 18px; gap: 4px; }
.quick button { width: 13px; height: 13px; }
.quick svg { width: 13px; height: 13px; }
.quick .arr { width: 5px; height: 4px; background: #e3f1f6; clip-path: polygon(0 0, 100% 0, 50% 100%); }
.quick .arr.big { width: 8px; height: 6px; }
.wincontrols { grid-column: span 2; display: flex; justify-content: flex-end; align-items: center; gap: 16px; padding-right: 8px; }
.wincontrols b { font-size: 9px; font-weight: 800; }
.wincontrols svg { width: 9px; height: 9px; }
.menubar { height: 19px; display: flex; align-items: stretch; }
.tabs { display: flex; flex: 1; padding-left: 2px; gap: 1px; }
.tabs button { padding: 1px 12px 0; white-space: nowrap; }
.tabs .file { margin-right: 8px; padding-bottom: 2px; }
.tabs .active { color: #e5e48b; border-bottom: 2px solid #d2d776; }
.find { width: 110px; height: 15px; align-self: center; background: #e3e8ea; color: #222; display: flex; align-items: center; padding: 0 2px 0 3px; margin-right: 38px; }
.find input { flex: 1; outline: 0; }
input::placeholder { color: inherit; opacity: 1; }
.find svg { width: 12px; height: 12px; }
.help { display: flex; align-items: center; gap: 5px; padding-right: 2px; }
.help svg { width: 13px; height: 13px; }
.help .sm svg { width: 8px; height: 8px; }

.ribbon { height: 69px; display: flex; font-size: 9px; line-height: 10px; border-bottom: 1px solid #cfcfcf; padding-top: 2px; }
.group { flex: none; display: flex; flex-direction: column; border-right: 1px solid #a9a9a9; overflow: hidden; }
.group h2 { text-align: center; line-height: 12px; white-space: nowrap; }
.group .body { height: 52px; display: flex; flex: none; }
.g-clip { width: 73px; }
.g-select { width: 124px; }
.g-select .body { padding-left: 5px; }
.g-sketch { width: 97px; padding-left: 3px; }
.g-comp { width: 123px; padding-left: 5px; }
.g-assemble { width: 178px; }
.g-modify { width: 168px; padding-left: 2px; }
.g-motor { width: 50px; padding-left: 4px; }
.g-face { width: 62px; }
.g-face .body { padding-left: 5px; }
.g-pattern { width: 44px; }
.g-pattern .body { padding-left: 4px; }
.g-config { width: 134px; padding-left: 4px; }
.g-mode { width: 28px; }
.g-mode .body { padding-left: 4px; }
.g-orient { width: 36px; }
.w8 { width: 8px; } .w10 { width: 10px; } .w16 { width: 16px; } .w17 { width: 17px; } .w18 { width: 18px; } .w20 { width: 20px; }
.w30 { width: 30px; } .w34 { width: 34px; } .w40 { width: 40px; } .w42 { width: 42px; } .w46 { width: 46px; } .w52 { width: 52px; } .w56 { width: 56px; } .w60 { width: 60px; }
.large { flex: none; display: block; text-align: center; white-space: nowrap; align-self: flex-start; padding-top: 1px; }
.large svg { width: 28px; height: 28px; margin: 0 auto 3px; }
.large.off { color: #8a8a8a; }
.large.pressed { height: 52px; background: #cfe5ec; border: 1px solid #8fb4bf; }
.large.tall { width: 100%; }
.large.tall svg { width: 14px; height: 14px; margin: 4px auto 13px; }
.large em, .libtools em, .combo em { display: inline-block; width: 5px; height: 3px; background: #333; clip-path: polygon(0 0, 100% 0, 50% 100%); vertical-align: 2px; }
.dn::after { content: ""; display: block; width: 4px; height: 3px; margin: auto; background: #333; clip-path: polygon(0 0, 100% 0, 50% 100%); }
span.dn { display: block; padding-top: 5px; }
.stack { flex: none; display: grid; grid-template-rows: repeat(3, 17px); }
.stack button { display: grid; place-items: center; }
.stack svg { width: 14px; height: 14px; }
.stack .on { background: #cfe5ec; }
.stack.line { border-left: 1px solid #b0b0b0; }
.configs { height: 52px; flex: none; display: flex; flex-direction: column; justify-content: space-between; padding: 6px 0 7px; }
.configs .row { display: flex; gap: 4px; align-items: center; }
.configs .row svg { width: 14px; height: 14px; }
.combo { width: 110px; height: 17px; border: 1px solid #aaa; background: #d2d2d2; display: flex; align-items: center; padding-right: 4px; }
.combo select { flex: 1; appearance: none; }

.shortcuts { margin-top: 3px; height: 18px; background: #bbb; font-size: 9px; flex: none; display: flex; }
.shortcuts nav { display: flex; align-items: center; background: #dfdfdf; border: 1px solid #b5b5b5; padding: 0 4px 0 10px; gap: 6px; }
.shortcuts button { display: flex; align-items: center; gap: 2px; white-space: nowrap; }
.shortcuts svg { width: 13px; height: 13px; }

.work { flex: 1; min-height: 0; display: flex; }
.document { flex: 1; min-width: 0; display: flex; flex-direction: column; }
.prompt { height: 20px; display: flex; align-items: stretch; border-bottom: 1px solid #a5a5a5; font: 11px/18px Roboto, "Noto Sans", sans-serif; white-space: nowrap; }
.promptbox { width: 29px; margin-right: 2px; background: #087594; display: grid; place-items: center; }
.promptbox svg { width: 16px; height: 6px; }
.doctabs { height: 26px; border-top: 1px solid #aaa; border-bottom: 1px solid #386878; padding: 1px 2px 0; display: flex; margin-top: 1px; }
.doctab { width: 132px; background: #006581; color: #fff; display: flex; align-items: center; padding: 0 3px 0 14px; gap: 3px; }
.doctab > svg { width: 12px; height: 12px; }
.doctab span { flex: 1; }
.doctab button svg { width: 8px; height: 8px; }
.view { flex: 1; min-height: 0; background: #fcfcfc; border-right: 1px solid #888; }
.view svg { width: 100%; height: 100%; }
.axes { font: 12px "Liberation Sans", sans-serif; }

.library { width: 240px; flex: none; display: flex; flex-direction: column; background: #fff; border-left: 3px solid #a5a9aa; border-right: 1px solid #888; font-family: "Open Sans", "Noto Sans", sans-serif; font-size: 9px; margin-left: 1px; }
.library header { height: 15px; background: #0c7b9d; color: #fff; display: flex; align-items: center; gap: 5px; padding: 0 5px 0 4px; font-size: 10px; flex: none; }
.library header > svg { width: 13px; height: 13px; }
.library header h2 { flex: 1; }
.library header button svg { width: 9px; height: 9px; }
.libtools { height: 28px; display: flex; align-items: center; gap: 1px; padding: 0 2px 3px 32px; flex: none; }
.libtools button { width: 19px; height: 18px; background: #e1e1e1; border: 1px solid #b5b5b5; display: flex; align-items: center; justify-content: center; flex: none; }
.libtools svg { width: 13px; height: 13px; }
.libtools .gap { margin-left: 18px; }
.libtools .wide { width: 24px; gap: 1px; }
.libtools .wide em { width: 4px; }
.libtools .part { margin-left: 4px; }
.field { height: 17px; margin: 0 0 4px 2px; border: 1px solid #a7a7a7; display: flex; align-items: center; padding: 0 3px 0 2px; gap: 2px; flex: none; font-family: Roboto, "Noto Sans", sans-serif; }
.field input, .field select { flex: 1; appearance: none; outline: 0; }
.field > svg { width: 9px; height: 9px; }
.field.folder { background: #e1e1e1; gap: 3px; }
.swatch { width: 11px; height: 12px; background: #bac797; }
.field.search { color: #555; margin-bottom: 1px; }
.files { flex: 1; min-height: 0; list-style: none; border: 1px solid #aaa; border-top: 2px solid #888; margin-left: 2px; padding-top: 1px; }
.files li { display: flex; align-items: center; height: 14px; gap: 1px; padding-left: 1px; }
.files svg { width: 13px; height: 13px; }
.files .sel span { background: #eee; padding-right: 2px; }
.files .sel svg { filter: hue-rotate(20deg) saturate(2); }
.preview { height: 165px; flex: none; border: solid #888; border-width: 2px 0 0 1px; margin: 3px 0 0 1px; background: #f0f0f0; padding: 7px 15px 8px; }
.preview svg { width: 100%; height: 100%; background: #fff; }
.mini { font: 5px "Liberation Sans", sans-serif; fill: #777; }

.rail { width: 24px; flex: none; display: flex; flex-direction: column; justify-content: space-between; align-items: center; padding: 7px 0 63px; margin-left: 1px; background: #d8d8d8; }
.railtab { display: flex; flex-direction: column; align-items: center; gap: 3px; }
.railtab svg { width: 15px; height: 15px; }
.railtab span { writing-mode: vertical-rl; font-size: 9px; }
.railicons { display: flex; flex-direction: column; gap: 13px; }
.railicons svg { width: 15px; height: 15px; }
.railicons button { display: block; }

.status { height: 17px; flex: none; background: #00647f; color: #fff; font-size: 9px; display: flex; align-items: center; }
.status p { flex: 1; text-align: right; }
.statustools { display: flex; align-items: center; gap: 4px; padding: 0 3px 0 91px; }
.statustools button { display: block; width: 14px; }
.statustools svg { width: 13px; height: 13px; }
.statustools .grip { width: 10px; height: 10px; }
.statustools input { appearance: none; width: 96px; height: 10px; background: linear-gradient(#99c6d3, #99c6d3) center / 100% 1px no-repeat; }
.statustools input::-webkit-slider-thumb { appearance: none; width: 6px; height: 9px; background: #eef4f6; border-radius: 0 0 3px 3px; }
```
